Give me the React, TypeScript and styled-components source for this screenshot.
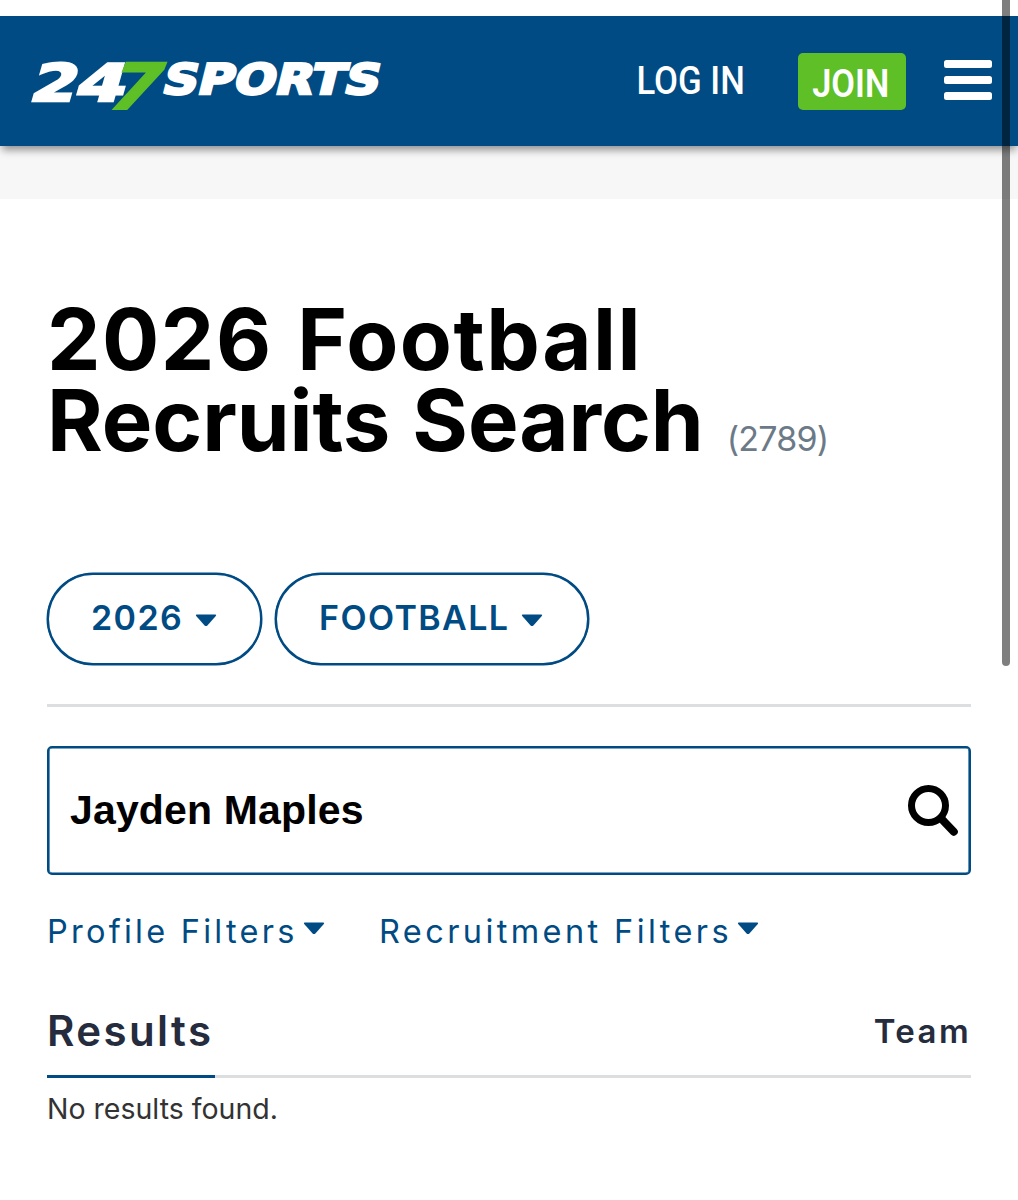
import React from 'react';
import styled, { createGlobalStyle } from 'styled-components';

const BLUE = '#004b83';
const GREEN = '#5ebf26';
const RULE = '#dcdedf';

const GlobalStyle = createGlobalStyle`
  *, *::before, *::after { box-sizing: border-box; }
  body { margin: 0; background: #fff; }
`;

const Page = styled.div`
  position: relative;
  height: 1200px;
  padding-top: 16px;
  overflow: hidden;
  background: #fff;
  font-family: Inter, 'Liberation Sans', sans-serif;
`;

const Header = styled.header`
  position: relative;
  display: flex;
  align-items: center;
  height: 130px;
  padding: 0 26px 0 28px;
  background: ${BLUE};
  box-shadow: 0 6px 8px -2px rgba(0, 0, 0, 0.42);
`;

const Logo = styled.svg`
  display: block;
  width: 360px;
  height: 60px;
  margin-top: 10px;
  overflow: visible;
`;

const Nav = styled.nav`
  display: flex;
  align-items: center;
  margin-left: auto;
`;

const Condensed = styled.span<{ $scale: number }>`
  display: block;
  transform: scaleX(${p => p.$scale});
`;

const LoginLink = styled.a`
  display: flex;
  justify-content: center;
  width: 110px;
  margin-right: 52px;
  color: #fff;
  font: 500 39.5px/56px Roboto, sans-serif;
  white-space: nowrap;
`;

const JoinButton = styled.button`
  display: flex;
  justify-content: center;
  width: 108px;
  height: 57px;
  margin-right: 38px;
  padding: 3px 2px 0 0;
  border: 0;
  border-radius: 5px;
  background: ${GREEN};
  color: #fff;
  font: 600 39px/57px Roboto, sans-serif;
`;

const Hamburger = styled.div`
  display: flex;
  flex-direction: column;
  gap: 8px;
  width: 48px;
  margin-bottom: 2px;
`;

const Bar = styled.span`
  height: 8px;
  border-radius: 2.5px;
  background: #fff;
`;

const AdStrip = styled.div`
  height: 53px;
  background: #f7f7f7;
`;

const Main = styled.main`
  padding: 101px 47px 0;
`;

const Title = styled.h1`
  margin: 0;
  color: #000;
  font-size: 85px;
  font-weight: 700;
  line-height: 80.5px;
  white-space: nowrap;
`;

const TitleLine = styled.span<{ $tracking: number; $word: number }>`
  letter-spacing: ${p => p.$tracking}px;
  word-spacing: ${p => p.$word}px;
`;

const Count = styled.span`
  margin-left: 23px;
  color: #6c7a87;
  font-size: 34px;
  font-weight: 400;
  line-height: 1;
  letter-spacing: -0.8px;
`;

const Pills = styled.div`
  display: flex;
  gap: 13px;
  height: 92px;
  margin-top: 112px;
`;

const Pill = styled.button<{ $width: number }>`
  display: flex;
  align-items: center;
  gap: 12px;
  width: ${p => p.$width}px;
  padding: 0 0 3px 42px;
  border: 2px solid ${BLUE};
  border-radius: 46px;
  background: #fff;
  box-shadow: 0 0 0 0.5px ${BLUE};
  color: ${BLUE};
  font: 600 34px/1 Inter, sans-serif;
  letter-spacing: 1.4px;

  svg { margin-top: 6px; }
`;

const Divider = styled.hr`
  height: 3px;
  margin: 39px 0;
  border: 0;
  background: ${RULE};
`;

const SearchBox = styled.div`
  display: flex;
  align-items: center;
  justify-content: space-between;
  height: 129px;
  padding: 0 10px 0 21px;
  border: 2px solid ${BLUE};
  border-radius: 5px;
  box-shadow: inset 0 0 0 0.6px ${BLUE};
`;

const Query = styled.span`
  padding-bottom: 1px;
  color: #000;
  font: 700 41px/1 'Liberation Sans', Arial, sans-serif;
  letter-spacing: 0.15px;
`;

const Filters = styled.div`
  display: flex;
  height: 40px;
  margin-top: 37px;
  color: ${BLUE};
  font-size: 32.5px;
  line-height: 40px;
`;

const Filter = styled.span<{ $width: number; $tracking: number }>`
  display: flex;
  align-items: center;
  width: ${p => p.$width}px;
  letter-spacing: ${p => p.$tracking}px;
  white-space: nowrap;

  svg { margin: 0 0 7px 5px; }
`;

const ResultsHead = styled.div`
  display: flex;
  align-items: stretch;
  justify-content: space-between;
  height: 69px;
  margin-top: 57px;
  box-shadow: inset 0 -3px ${RULE};
  color: #252c3d;
`;

const ResultsTab = styled.h2`
  width: 168px;
  margin: 0;
  border-bottom: 3px solid ${BLUE};
  font-size: 42px;
  font-weight: 600;
  line-height: 44px;
  letter-spacing: 2.4px;
  white-space: nowrap;
`;

const Team = styled.span`
  font-size: 33px;
  font-weight: 600;
  line-height: 44px;
  letter-spacing: 2.4px;
`;

const Empty = styled.p`
  margin: 13px 0 0;
  color: #333;
  font-size: 28.5px;
  line-height: 36px;
`;

const Scrollbar = styled.div`
  position: absolute;
  top: 0;
  left: 1002px;
  width: 8px;
  height: 666px;
  border-radius: 0 0 4px 4px;
  background: rgba(0, 0, 0, 0.5);
`;

const Caret = () => (
  <svg width="22" height="13" viewBox="0 0 22 13">
    <path d="M1.600 .5h18.800q1.400.2.4 1.600l-8.400 9.300q-1.400 1.400-2.800 0L1.200 2.100Q.2.7 1.600.5z" fill={BLUE} />
  </svg>
);

const BrandLogo = () => (
  <Logo viewBox="28 56 360 60" fontFamily="'DejaVu Sans', sans-serif" fontWeight="700">
    <g transform="translate(28 101) skewX(-16)" fill="#fff" stroke="#fff" strokeWidth="2.600" fontSize="51.500">
      <text textLength="46" lengthAdjust="spacingAndGlyphs">2</text>
      <text x="45" textLength="50" lengthAdjust="spacingAndGlyphs">4</text>
    </g>
    <g transform="translate(103 109) skewX(-22)">
      <text fill={GREEN} stroke={GREEN} strokeWidth="2" fontSize="63.500" textLength="50" lengthAdjust="spacingAndGlyphs">7</text>
    </g>
    <g transform="translate(160.500 94) skewX(-14)">
      <text fill="#fff" stroke="#fff" strokeWidth="2.600" fontSize="42" textLength="217" lengthAdjust="spacingAndGlyphs">SPORTS</text>
    </g>
  </Logo>
);

export default function App() {
  return (
    <Page>
      <GlobalStyle />
      <Header>
        <BrandLogo />
        <Nav>
          <LoginLink><Condensed $scale={0.88}>LOG IN</Condensed></LoginLink>
          <JoinButton><Condensed $scale={0.88}>JOIN</Condensed></JoinButton>
          <Hamburger><Bar /><Bar /><Bar /></Hamburger>
        </Nav>
      </Header>
      <AdStrip />
      <Main>
        <Title>
          <TitleLine $tracking={1.5} $word={3}>2026 Football</TitleLine>
          <br />
          <TitleLine $tracking={-0.1} $word={2}>Recruits Search</TitleLine>
          <Count>(2789)</Count>
        </Title>
        <Pills>
          <Pill $width={215}>2026<Caret /></Pill>
          <Pill $width={314}>FOOTBALL<Caret /></Pill>
        </Pills>
        <Divider />
        <SearchBox>
          <Query>Jayden Maples</Query>
          <svg width="52" height="52" viewBox="0 0 52 52" fill="none" stroke="#000" strokeWidth="7">
            <circle cx="21.500" cy="20.500" r="17" />
            <path d="M34 33l3 3" />
            <path d="M36.500 36l10.300 10.700" strokeWidth="8" strokeLinecap="round" />
          </svg>
        </SearchBox>
        <Filters>
          <Filter $width={332} $tracking={3.25}>Profile Filters<Caret /></Filter>
          <Filter $width={400} $tracking={3.4}>Recruitment Filters<Caret /></Filter>
        </Filters>
        <ResultsHead>
          <ResultsTab>Results</ResultsTab>
          <Team>Team</Team>
        </ResultsHead>
        <Empty>No results found.</Empty>
      </Main>
      <Scrollbar />
    </Page>
  );
}
